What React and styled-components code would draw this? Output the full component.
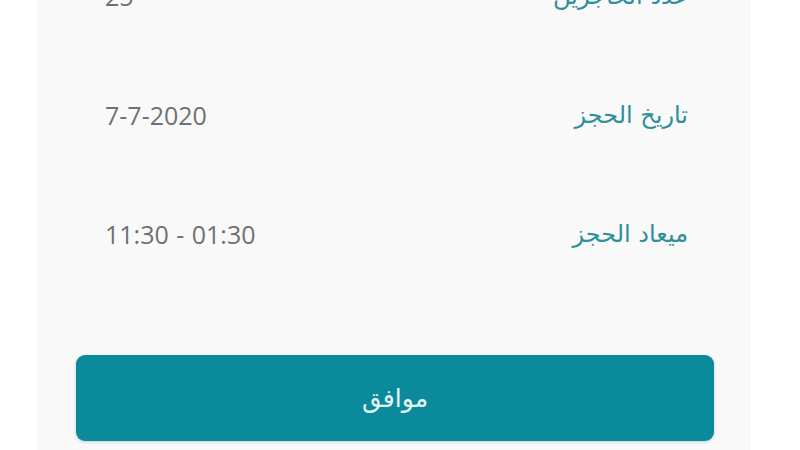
import styled, { createGlobalStyle } from "styled-components";

const GlobalStyle = createGlobalStyle`
  html, body {
    margin: 0;
    padding: 0;
    background: #ffffff;
    overflow: hidden;
  }
  body {
    font-family: "Open Sans", "DejaVu Sans", sans-serif;
  }
`;

const rows = [
  { label: "عدد الحاجزين", value: "25" },
  { label: "تاريخ الحجز", value: "7-7-2020" },
  { label: "ميعاد الحجز", value: "11:30 - 01:30" },
];

export default function App() {
  return (
    <Page>
      <GlobalStyle />
      <Card dir="rtl">
        <List>
          {rows.map((r) => (
            <Row key={r.label}>
              <Label>{r.label}</Label>
              <Value dir="ltr">{r.value}</Value>
            </Row>
          ))}
        </List>
        <Button>موافق</Button>
      </Card>
    </Page>
  );
}

const Page = styled.div`
  width: 800px;
  height: 450px;
  overflow: hidden;
  padding-left: 37px;
  box-sizing: border-box;
`;

const Card = styled.div`
  width: 714px;
  min-height: 520px;
  background: #f9f9f9;
  display: flex;
  flex-direction: column;
  padding: 0 37px 0 39px;
  box-sizing: border-box;
`;

const List = styled.div`
  margin-top: -64px;
  display: flex;
  flex-direction: column;
  padding: 0 26px 0 29px;
`;

const Row = styled.div`
  height: 119px;
  display: flex;
  align-items: center;
  justify-content: space-between;
`;

const Label = styled.span`
  font-family: "DejaVu Sans", sans-serif;
  font-size: 24px;
  color: #2f8f9b;
  letter-spacing: 0.2px;
`;

const Value = styled.span`
  font-family: "Open Sans", sans-serif;
  font-size: 25px;
  color: #6e7173;
  word-spacing: 1px;
`;

const Button = styled.button`
  margin-top: 62px;
  height: 86px;
  width: 100%;
  border: none;
  border-radius: 9px;
  background: #0b8a9c;
  box-shadow: 0 1px 3px rgba(0, 80, 90, 0.25);
  color: #e3f6f6;
  font-family: "DejaVu Sans", sans-serif;
  font-size: 25px;
  cursor: pointer;
`;
